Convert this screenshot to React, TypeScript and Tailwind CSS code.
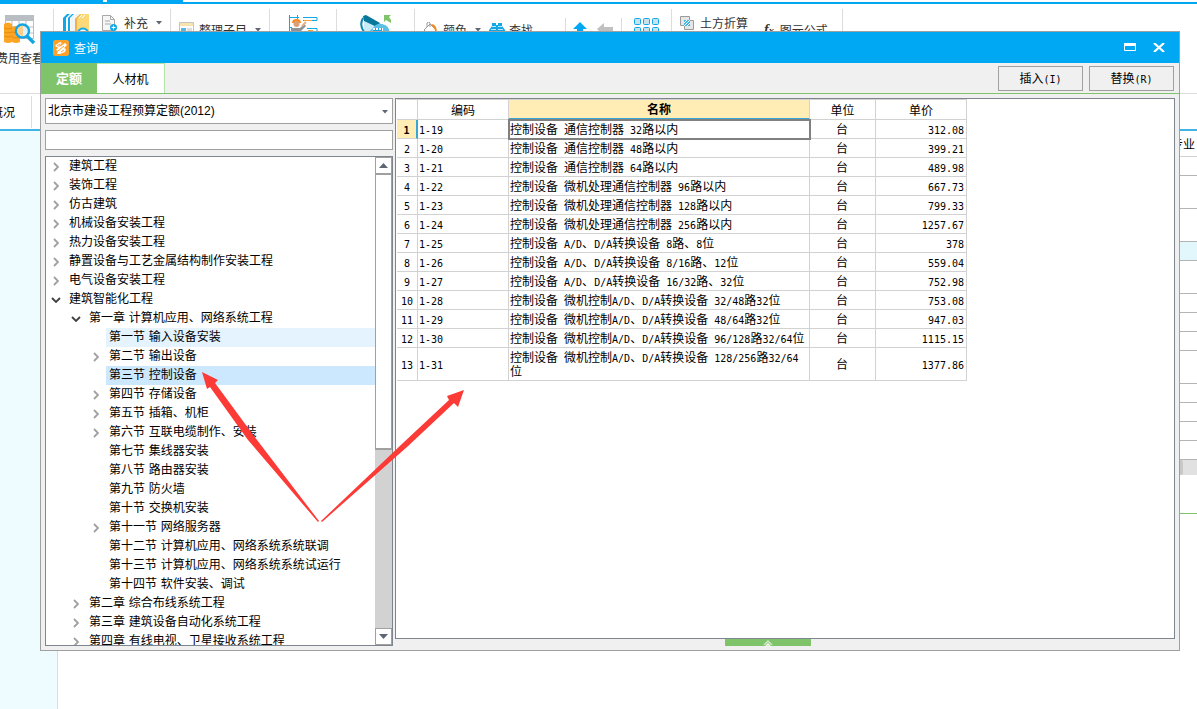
import { useState } from "react";
import clsx from "clsx";

type TreeNode = { level: 0 | 1 | 2; label: string; state?: "open" | "closed" };

const tree: TreeNode[] = [
    { level: 0, label: "建筑工程", state: "closed" },
    { level: 0, label: "装饰工程", state: "closed" },
    { level: 0, label: "仿古建筑", state: "closed" },
    { level: 0, label: "机械设备安装工程", state: "closed" },
    { level: 0, label: "热力设备安装工程", state: "closed" },
    { level: 0, label: "静置设备与工艺金属结构制作安装工程", state: "closed" },
    { level: 0, label: "电气设备安装工程", state: "closed" },
    { level: 0, label: "建筑智能化工程", state: "open" },
    { level: 1, label: "第一章 计算机应用、网络系统工程", state: "open" },
    { level: 2, label: "第一节 输入设备安装" },
    { level: 2, label: "第二节 输出设备", state: "closed" },
    { level: 2, label: "第三节 控制设备" },
    { level: 2, label: "第四节 存储设备", state: "closed" },
    { level: 2, label: "第五节 插箱、机柜", state: "closed" },
    { level: 2, label: "第六节 互联电缆制作、安装", state: "closed" },
    { level: 2, label: "第七节 集线器安装" },
    { level: 2, label: "第八节 路由器安装" },
    { level: 2, label: "第九节 防火墙" },
    { level: 2, label: "第十节 交换机安装" },
    { level: 2, label: "第十一节 网络服务器", state: "closed" },
    { level: 2, label: "第十二节 计算机应用、网络系统系统联调" },
    { level: 2, label: "第十三节 计算机应用、网络系统系统试运行" },
    { level: 2, label: "第十四节 软件安装、调试" },
    { level: 1, label: "第二章 综合布线系统工程", state: "closed" },
    { level: 1, label: "第三章 建筑设备自动化系统工程", state: "closed" },
    { level: 1, label: "第四章 有线电视、卫星接收系统工程", state: "closed" },
];

const quotas = [
    { code: "1-19", name: "控制设备 通信控制器 32路以内", unit: "台", price: "312.08" },
    { code: "1-20", name: "控制设备 通信控制器 48路以内", unit: "台", price: "399.21" },
    { code: "1-21", name: "控制设备 通信控制器 64路以内", unit: "台", price: "489.98" },
    { code: "1-22", name: "控制设备 微机处理通信控制器 96路以内", unit: "台", price: "667.73" },
    { code: "1-23", name: "控制设备 微机处理通信控制器 128路以内", unit: "台", price: "799.33" },
    { code: "1-24", name: "控制设备 微机处理通信控制器 256路以内", unit: "台", price: "1257.67" },
    { code: "1-25", name: "控制设备 A/D、D/A转换设备 8路、8位", unit: "台", price: "378" },
    { code: "1-26", name: "控制设备 A/D、D/A转换设备 8/16路、12位", unit: "台", price: "559.04" },
    { code: "1-27", name: "控制设备 A/D、D/A转换设备 16/32路、32位", unit: "台", price: "752.98" },
    { code: "1-28", name: "控制设备 微机控制A/D、D/A转换设备 32/48路32位", unit: "台", price: "753.08" },
    { code: "1-29", name: "控制设备 微机控制A/D、D/A转换设备 48/64路32位", unit: "台", price: "947.03" },
    { code: "1-30", name: "控制设备 微机控制A/D、D/A转换设备 96/128路32/64位", unit: "台", price: "1115.15" },
    { code: "1-31", name: "控制设备 微机控制A/D、D/A转换设备 128/256路32/64位", unit: "台", price: "1377.86" },
];

// Rows of the project grid, only their right edge shows beside the dialog
const projectRows = [
    "h-[19px]",
    "h-[33px]",
    "h-[33px]",
    "h-[19px] bg-[#e2f7fc]",
    "h-[33px]",
    "h-[19px]",
    "h-[19px]",
    "h-[19px]",
    "h-[33px]",
    "h-[19px]",
    "h-[19px]",
    "h-[19px]",
    "h-[19px]",
];

// Half-width characters take half of a 12px ideograph
function Mono({ text }: { text: string }) {
    return (
        <>
            {text.split(/([\x20-\x7e]+)/).map((part, i) =>
                i % 2 ? (
                    <span key={i} className="font-['DejaVu_Sans_Mono',monospace] text-[10px] leading-none">
                        {part}
                    </span>
                ) : (
                    part
                ),
            )}
        </>
    );
}

function Caret({ className }: { className?: string }) {
    return (
        <svg viewBox="0 0 6 4" className={clsx("h-1 w-1.5 shrink-0", className)} fill="#5f6673">
            <path d="M0 0h6L3 3.5z" />
        </svg>
    );
}

function CostIcon() {
    return (
        <svg viewBox="0 0 32 30" className="h-[30px] w-8" fill="none">
            <rect x="1.500" y="1.500" width="28" height="23" fill="#fff" stroke="#b9bec3" />
            <path d="M1 1h29v6H1z" fill="#b9bec3" />
            <path d="M8 7v17M15 7v17M22 7v17M1 13h29M1 19h29" stroke="#b9bec3" />
            <path d="M0 10q4-3 8 0v18q-4 2-8 0zM8 13q4-2 8 0v15q-4 2-8 0z" fill="#fba524" />
            <path d="M0 14q4 2 8 0M0 18q4 2 8 0M0 22q4 2 8 0M8 18q4 2 8 0M8 23q4 2 8 0" stroke="#e98b12" />
            <circle cx="18.500" cy="17" r="6.500" fill="#dff2fb" stroke="#11a5e4" strokeWidth="2.400" />
            <path d="M13 16q3-5 6-4v10q-5 0-6-6" fill="#fbd08c" />
            <path d="m23 22 7 7" stroke="#11a5e4" strokeWidth="3.400" />
        </svg>
    );
}

function BooksIcon() {
    return (
        <svg viewBox="0 0 28 28" className="size-7" fill="none">
            <path d="M1 4h3v24H1zM6 4h2v24H6z" fill="#12a7e6" />
            <path d="m1 4 4-4h3L4 4zM6 4l4-4h2L8 4z" fill="#12a7e6" />
            <path d="m9 4 4-4h4l-4 5v23H9z" fill="#eef5f8" />
            <path d="m13 5 5-5h9v22l-6 5h-8z" fill="#fbd878" />
            <path d="m13 5 5-5h1l-4 5v22h-2z" fill="#f0b04c" />
            <path d="m17 4 3-3M20 4l3-3" stroke="#fff" />
            <circle cx="21" cy="20" r="5.500" fill="#fff" stroke="#12a7e6" strokeWidth="2" />
        </svg>
    );
}

function DocAddIcon() {
    return (
        <svg viewBox="0 0 16 17" className="h-[17px] w-4" fill="none">
            <path d="M.5.5h8l4 4v11H.5z" fill="#f6f6f6" stroke="#a9a9a9" />
            <path d="M8.500.5v4h4M3 6h5M3 9h6" stroke="#a9a9a9" />
            <circle cx="11.500" cy="12.500" r="3.500" fill="#12a7e6" />
            <path d="M9.500 12.500h4M11.500 10.500v4" stroke="#fff" />
        </svg>
    );
}

function SortIcon() {
    return (
        <svg viewBox="0 0 16 16" className="size-4" fill="none">
            <path d="M.5.5h14v15H.5z" fill="#fff" stroke="#c3c3c3" />
            <path d="M1 1h13v3H1z" fill="#f7e3ab" />
            <path d="M2 6h5v3H2zM2 11h5v3H2z" fill="#57b9dc" />
            <path d="M8 7h5M8 9h5M8 12h5" stroke="#b9b9b9" />
        </svg>
    );
}

function WorkerIcon() {
    return (
        <svg viewBox="0 0 30 28" className="h-7 w-[30px]" fill="none">
            <path d="M1.500 1v27M9.500 1v4" stroke="#12a7e6" />
            <path d="M1 3.500h10M1 13.500h3" stroke="#12a7e6" />
            <path d="M15 3.500h14v3H15M19 14.500h10v4H19" stroke="#12a7e6" />
            <path d="M16 6.500h8M20 16.500h5" stroke="#f0a63a" />
            <path d="M4 9q0-4 4.500-4T13 9z" fill="#ff8a1c" />
            <circle cx="8.500" cy="10" r="3" fill="#d9a07a" />
            <path d="M3 14h9l4-4 2 2-6 6v10H3z" fill="#8f9499" />
            <path d="m14 12 4-4" stroke="#e8b18d" strokeWidth="2" />
        </svg>
    );
}

function MeterIcon() {
    return (
        <svg viewBox="0 0 32 28" className="h-7 w-8" fill="none">
            <path d="m4 5 12 6-5 8-7-2z" fill="#c9eaf7" />
            <path d="M3 4Q-1 11 4 18" stroke="#0d86b0" strokeWidth="2" />
            <path d="m3 2 3-1 14 8-3 4L4 7z" fill="#07779c" />
            <path d="M8 19q2-3 4-4 4-6 10-5 7 1 8 9v9H10z" fill="#5ac1e4" />
            <path d="M13 14h10v12H12z" fill="#fff" />
            <path d="M13 16.500h9M13 19.500h9M15.500 14v8M18.500 14v8M21.500 14v8" stroke="#12a7e6" />
            <path d="M24 1h7l-2 2 2 3v3l-5-3-2 2z" fill="#7fc36a" />
        </svg>
    );
}

function PaintIcon() {
    return (
        <svg viewBox="0 0 16 16" className="size-4" fill="none">
            <path d="m1 8 6-6 6 6-6 6z" fill="#fff" stroke="#9a9a9a" />
            <path d="M4 5V1q2-2 3 0v4" stroke="#9a9a9a" />
            <path d="M8 2q6 0 6 9l-2-3z" fill="#f58a1f" />
        </svg>
    );
}

function BinocularsIcon() {
    return (
        <svg viewBox="0 0 16 16" className="size-4" fill="#12a7e6">
            <path d="M3 1h4v2h2V1h4v3l3 4v7H9v-4H7v4H0V8l3-4z" />
            <path d="M3 4.500h4M9 4.500h4M2 7.500h5M9 7.500h5" stroke="#bfe8f8" />
        </svg>
    );
}

function BlocksIcon() {
    return (
        <svg viewBox="0 0 26 26" className="size-[26px]" fill="#c6e2f0" stroke="#12a7e6">
            {[0.5, 9.5, 18.5].map((y) =>
                [0.5, 9.5, 18.5].map((x) => <rect key={`${x}-${y}`} x={x} y={y} width="6" height="6" rx="1" />),
            )}
        </svg>
    );
}

function OverlapIcon() {
    return (
        <svg viewBox="0 0 14 14" className="size-3.5" fill="none">
            <path d="M.5.5h9v9h-9z" fill="#e6e6e6" stroke="#9b9b9b" />
            <path d="M4.500 4.500h9v9h-9z" fill="#e6e6e6" stroke="#9b9b9b" />
            <path d="M4 4h6v6H4z" fill="#3fb5e3" />
            <path d="m4 7 3-3M4 10l6-6M7 10l3-3" stroke="#fff" />
        </svg>
    );
}

const tool = "flex items-center gap-1.5 whitespace-nowrap";
const group = "flex shrink-0 items-start border-r border-[#dcdcdc]";

function Toolbar() {
    return (
        <div className="flex h-[90px] items-start border-b border-[#dcdcdc] pt-[5px] text-[#333]">
            <div className={clsx(group, "h-20 w-[54px] pt-[5px]")}>
                <button className="-ml-1 flex flex-col items-center gap-[5px] whitespace-nowrap">
                    <CostIcon />
                    <span>费用查看</span>
                </button>
            </div>
            <div className={clsx(group, "h-20 w-[117px] gap-3 pt-[5px] pl-2")}>
                <button aria-label="定额库">
                    <BooksIcon />
                </button>
                <button className={tool}>
                    <DocAddIcon />
                    补充
                    <Caret className="ml-0.5" />
                </button>
            </div>
            <div className={clsx(group, "h-20 w-[99px] pt-3 pl-2")}>
                <button className="flex items-center gap-1 whitespace-nowrap">
                    <SortIcon />
                    整理子目
                    <Caret className="ml-1" />
                </button>
            </div>
            <div className={clsx(group, "h-20 w-[67px] justify-center pt-[5px]")}>
                <button aria-label="人工">
                    <WorkerIcon />
                </button>
            </div>
            <div className={clsx(group, "h-20 w-[78px] justify-center pt-[5px]")}>
                <button aria-label="计量">
                    <MeterIcon />
                </button>
            </div>
            <div className={clsx(group, "mt-[9px] h-16 w-[151px] gap-2 pt-[3px] pl-2")}>
                <button className="flex items-center gap-1 whitespace-nowrap">
                    <PaintIcon />
                    颜色
                    <Caret className="ml-1" />
                </button>
                <button className="flex items-center gap-1 whitespace-nowrap">
                    <BinocularsIcon />
                    查找
                </button>
            </div>
            <div className={clsx(group, "mt-[9px] h-16 w-14 gap-2.5 pt-1 pl-[7px]")}>
                <button aria-label="上移">
                    <svg viewBox="0 0 14 14" className="size-3.5" fill="#00a8f3">
                        <path d="m7 0 7 7h-4v7H4V7H0z" />
                    </svg>
                </button>
                <button aria-label="左移">
                    <svg viewBox="0 0 16 14" className="h-3.5 w-4" fill="#c0c0c0">
                        <path d="m0 7 7-6v4h9v5H7v4z" />
                    </svg>
                </button>
            </div>
            <div className={clsx(group, "h-20 w-[50px] pt-[9px] pl-3")}>
                <button aria-label="展开">
                    <BlocksIcon />
                </button>
            </div>
            <div className={clsx(group, "h-20 w-[171px] gap-4 pt-[5px] pl-2")}>
                <button className={tool}>
                    <OverlapIcon />
                    土方折算
                </button>
                <button className="mt-[7px] flex items-center gap-1.5 whitespace-nowrap">
                    <span className="font-['Liberation_Serif',serif] text-sm leading-4 font-bold italic">
                        f<span className="text-[10px]">x</span>
                    </span>
                    图元公式
                </button>
            </div>
        </div>
    );
}

function MainWindow() {
    return (
        <div className="flex min-h-full flex-col">
            <div className="flex h-1 gap-1 border-b-2 border-[#00a8f3]">
                <div className="w-[103px] bg-[#00a8f3]" />
                <div className="w-[76px] bg-[#00a8f3]" />
            </div>
            <Toolbar />
            <div className="flex h-[37px] items-center border-b-2 border-[#40b4e5]">
                <div className="flex h-8 w-8 items-center justify-end overflow-hidden border-r border-[#dcdcdc] pr-4 whitespace-nowrap">
                    概况
                </div>
            </div>
            <div className="flex flex-1">
                <div className="w-[58px] border-r border-[#dcdcdc] bg-[#effcff] pt-2 pr-[14px] text-right leading-3 text-[#40b4e5]">
                    ‹
                </div>
                <div className="flex-1">
                    <div className="flex h-[26px] items-center justify-end border-b border-[#d2d2d2] pr-0.5">专业</div>
                    {projectRows.map((row, i) => (
                        <div key={i} className={clsx("border-b border-[#b4b4b4]", row)} />
                    ))}
                    <div className="flex h-[15px] justify-end bg-[#e1e1e1] pr-[14px]">
                        <div className="w-20 rounded-xs bg-[#c8c8c8]" />
                    </div>
                    <div className="h-[39px] border-b border-[#7fc36a]" />
                </div>
            </div>
        </div>
    );
}

const indent = { 0: "pl-0", 1: "pl-5", 2: "pl-10" };

function QuotaTree() {
    const [selected, setSelected] = useState(11);

    return (
        <div className="flex min-h-0 flex-1 border border-[#7f858e] bg-white">
            <ul role="tree" className="min-w-0 flex-1 overflow-hidden font-['DejaVu_Sans','Noto_Sans_CJK_SC',sans-serif]">
                {tree.map((node, i) => (
                    <li
                        key={node.label}
                        role="treeitem"
                        aria-selected={i === selected}
                        className={clsx("flex h-[19px] whitespace-nowrap", indent[node.level])}
                    >
                        <button aria-label="展开" className="flex w-5 shrink-0 items-center justify-center">
                            {node.state === "closed" && (
                                <svg viewBox="0 0 6 10" className="h-2.5 w-1.5" fill="none" stroke="#a0a0a0" strokeWidth="1.800">
                                    <path d="m1 1 4 4-4 4" />
                                </svg>
                            )}
                            {node.state === "open" && (
                                <svg viewBox="0 0 10 6" className="h-1.5 w-2.5" fill="none" stroke="#404040" strokeWidth="1.800">
                                    <path d="m1 1 4 4 4-4" />
                                </svg>
                            )}
                        </button>
                        <button
                            onClick={() => setSelected(i)}
                            className={clsx(
                                "flex-1 pl-[3px] text-left leading-[19px]",
                                i === selected && "bg-[#cce8ff]",
                                i === 9 && i !== selected && "bg-[#e5f3ff]",
                            )}
                        >
                            {node.label}
                        </button>
                    </li>
                ))}
            </ul>
            <div className="flex w-[17px] shrink-0 flex-col bg-[#d2d2d2]">
                <button aria-label="向上" className="flex h-[17px] items-center justify-center border border-[#a0a0a0] bg-white">
                    <svg viewBox="0 0 9 5" className="h-[5px] w-[9px]" fill="#5f6673">
                        <path d="M4.500 0 9 5H0z" />
                    </svg>
                </button>
                <div className="h-[276px] border border-[#a0a0a0] border-b-2 bg-white" />
                <div className="flex-1" />
                <button aria-label="向下" className="flex h-[17px] items-center justify-center border border-[#a0a0a0] bg-white">
                    <svg viewBox="0 0 9 5" className="h-[5px] w-[9px]" fill="#5f6673">
                        <path d="M0 0h9L4.500 5z" />
                    </svg>
                </button>
            </div>
        </div>
    );
}

const cell = "border-r border-b border-[#d2d2d2] py-0.5 pr-0.5 pl-px";

function QuotaTable() {
    return (
        <table className="w-[570px] table-fixed border-separate border-spacing-0 leading-[14px]">
            <colgroup>
                <col className="w-[21px]" />
                <col className="w-[91px]" />
                <col className="w-[301px]" />
                <col className="w-[66px]" />
                <col className="w-[91px]" />
            </colgroup>
            <thead>
                <tr className="h-[21px]">
                    <th className="border-t border-r border-b border-[#d2d2d2]" />
                    <th className="border-t border-r border-b border-[#d2d2d2] font-normal">编码</th>
                    <th className="border-t border-r border-b-2 border-[#d2d2d2] border-b-[#36a6d4] bg-[#ffedb5] font-bold">名称</th>
                    <th className="border-t border-r border-b border-[#d2d2d2] font-normal">单位</th>
                    <th className="border-t border-r border-b border-[#d2d2d2] font-normal">单价</th>
                </tr>
            </thead>
            <tbody>
                {quotas.map((row, i) => (
                    <tr key={row.code}>
                        <td
                            className={
                                i === 0
                                    ? "border-r-2 border-b border-[#d2d2d2] border-r-[#36a6d4] bg-[#ffedb5] text-center font-bold"
                                    : "border-r border-b border-[#d2d2d2] text-center"
                            }
                        >
                            <Mono text={String(i + 1)} />
                        </td>
                        <td className={cell}>
                            <Mono text={row.code} />
                        </td>
                        <td className={clsx(cell, i === 0 && "outline-2 -outline-offset-1 outline-[#808080]")}>
                            <Mono text={row.name} />
                        </td>
                        <td className={clsx(cell, "text-center")}>{row.unit}</td>
                        <td className={clsx(cell, "text-right")}>
                            <Mono text={row.price} />
                        </td>
                    </tr>
                ))}
            </tbody>
        </table>
    );
}

function QueryDialog() {
    return (
        <div
            role="dialog"
            aria-label="查询"
            className="absolute top-[31px] right-[17px] bottom-[58px] left-10 flex flex-col border border-[#a0a0a0] bg-[#f0f0f0]"
        >
            <div className="flex h-[31px] shrink-0 items-center bg-[#00a8f3] pr-3.5 pl-3 text-white">
                <svg viewBox="0 0 16 16" className="mr-[5px] size-4" fill="none">
                    <rect width="16" height="16" rx="2.500" fill="#f9a12b" />
                    <path d="M2 5.500 7 2l2 1-4 4 3-1 4-3 2 2-3 3 2 1-1 3-5 2H4l1-3-2-1 2-2z" fill="#fff" />
                    <path d="m5 11 6-5M4 6l3-2M8 12l3-2" stroke="#f9a12b" />
                </svg>
                <h1 className="flex-1">查询</h1>
                <button aria-label="最大化" className="mr-[17px]">
                    <svg viewBox="0 0 12 9" className="h-[9px] w-3" fill="none" stroke="#fff">
                        <path d="M.5.5h11v7H.5z" />
                        <path d="M0 1.500h12" strokeWidth="3" />
                    </svg>
                </button>
                <button aria-label="关闭">
                    <svg viewBox="0 0 12 9" className="h-[9px] w-3" fill="none" stroke="#fff" strokeWidth="2.200">
                        <path d="m1 0 10 9M11 0 1 9" />
                    </svg>
                </button>
            </div>

            <div className="flex h-[31px] shrink-0 border-b border-[#7fc36a]">
                <button className="w-14 bg-[#7fc36a] text-[13px] font-bold text-white">定额</button>
                <button className="w-[68px] border-t border-r border-[#b5e2a5] bg-white">人材机</button>
                <div className="flex flex-1 items-center justify-end gap-1.5 pr-[5px]">
                    <button className="h-[25px] w-[85px] border border-[#a0a0a0]">
                        <Mono text="插入(I)" />
                    </button>
                    <button className="h-[25px] w-[85px] border border-[#a0a0a0]">
                        <Mono text="替换(R)" />
                    </button>
                </div>
            </div>

            <div className="flex min-h-0 flex-1 gap-0.5 p-1">
                <div className="flex w-[348px] shrink-0 flex-col gap-1.5">
                    <div className="relative">
                        <select
                            aria-label="定额库"
                            className="block h-[26px] w-full appearance-none border border-[#a0a0a0] bg-white px-0.5 font-['Liberation_Sans','Noto_Sans_CJK_SC',sans-serif]"
                        >
                            <option>北京市建设工程预算定额(2012)</option>
                        </select>
                        <Caret className="pointer-events-none absolute top-3 right-[5px]" />
                    </div>
                    <input aria-label="查找定额" className="h-5 w-full border border-[#a0a0a0] bg-white px-1" />
                    <QuotaTree />
                </div>
                <div className="flex min-w-0 flex-1 flex-col">
                    <div className="min-h-0 flex-1 overflow-hidden border border-[#7f858e] bg-white pl-px">
                        <QuotaTable />
                    </div>
                    <div className="flex h-[7px] justify-center pr-[34px]">
                        <button aria-label="展开明细" className="flex w-[86px] items-center justify-center bg-[#7fc36a]">
                            <svg viewBox="0 0 10 7" className="h-[7px] w-2.5" fill="none" stroke="#cdeac4" strokeWidth="1.500">
                                <path d="m1 6 4-4 4 4" />
                                <path d="m3 7 2-2 2 2" stroke="#fff" />
                            </svg>
                        </button>
                    </div>
                </div>
            </div>
        </div>
    );
}

export default function App() {
    return (
        <div className="relative h-screen overflow-hidden bg-white font-['Noto_Sans_CJK_SC',sans-serif] text-xs leading-[18px] text-black">
            <MainWindow />
            <QueryDialog />
            {/* Annotation arrows: from the tree node to the rows that it lists */}
            <svg
                viewBox="0 0 270 160"
                className="pointer-events-none absolute top-[370px] left-[200px] h-40 w-[270px]"
                fill="#fc3a36"
            >
                <path d="m2 2 16 8-3 3 39 53 65 85-1 1L48 70 10 17l-3 2z" />
                <path d="m264 20-17 6 2 4-46 43-82 78 1 1 85-75 47-44 4 4z" />
            </svg>
        </div>
    );
}
